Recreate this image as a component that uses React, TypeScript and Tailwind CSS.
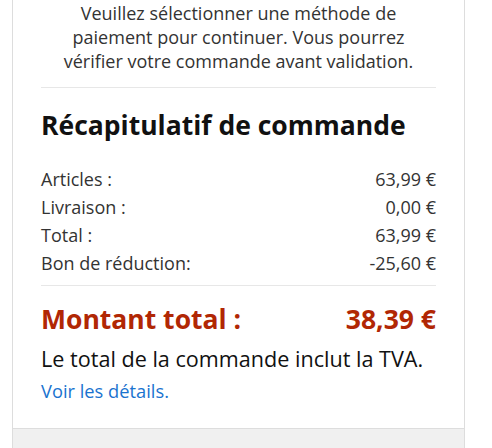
export default function App() {
  const rows = [
    ["Articles :", "63,99 €"],
    ["Livraison :", "0,00 €"],
    ["Total :", "63,99 €"],
    ["Bon de réduction:", "-25,60 €"],
  ];
  return (
    <div className="h-[448px] w-[492px] overflow-hidden bg-white font-['Open_Sans',sans-serif] text-[#111]">
      <div className="ml-3 w-[453px] border-x border-[#ddd]">
        <div className="px-7 pt-[1px]">
          <p className="text-center text-[18px] leading-[24px] text-[#333]">
            Veuillez sélectionner une méthode de
            <br />
            paiement pour continuer. Vous pourrez
            <br />
            vérifier votre commande avant validation.
          </p>
          <div className="mt-[14px] border-t border-[#e7e7e7]" />
          <h2 className="mt-[20px] text-[26.5px] font-bold leading-[34px]">Récapitulatif de commande</h2>
          <div className="mt-[23px] flex flex-col text-[18px] leading-[28px] text-[#333]">
            {rows.map(([label, value]) => (
              <div key={label} className="flex justify-between">
                <span>{label}</span>
                <span>{value}</span>
              </div>
            ))}
          </div>
          <div className="mt-[8px] border-t border-[#e7e7e7]" />
          <div className="mt-[16px] flex justify-between text-[26.5px] font-bold leading-[34px] text-[#b12704]">
            <span>Montant total :</span>
            <span>38,39 €</span>
          </div>
          <p className="mt-[8px] text-[21.6px] leading-[30px]">Le total de la commande inclut la TVA.</p>
          <a className="mt-[4px] block text-[18.3px] leading-[26px] text-[#1a73cf]">Voir les détails.</a>
          <div className="h-[24px]" />
        </div>
        <div className="h-[30px] border-t border-[#ddd] bg-[#f0f0f0]" />
      </div>
    </div>
  );
}
